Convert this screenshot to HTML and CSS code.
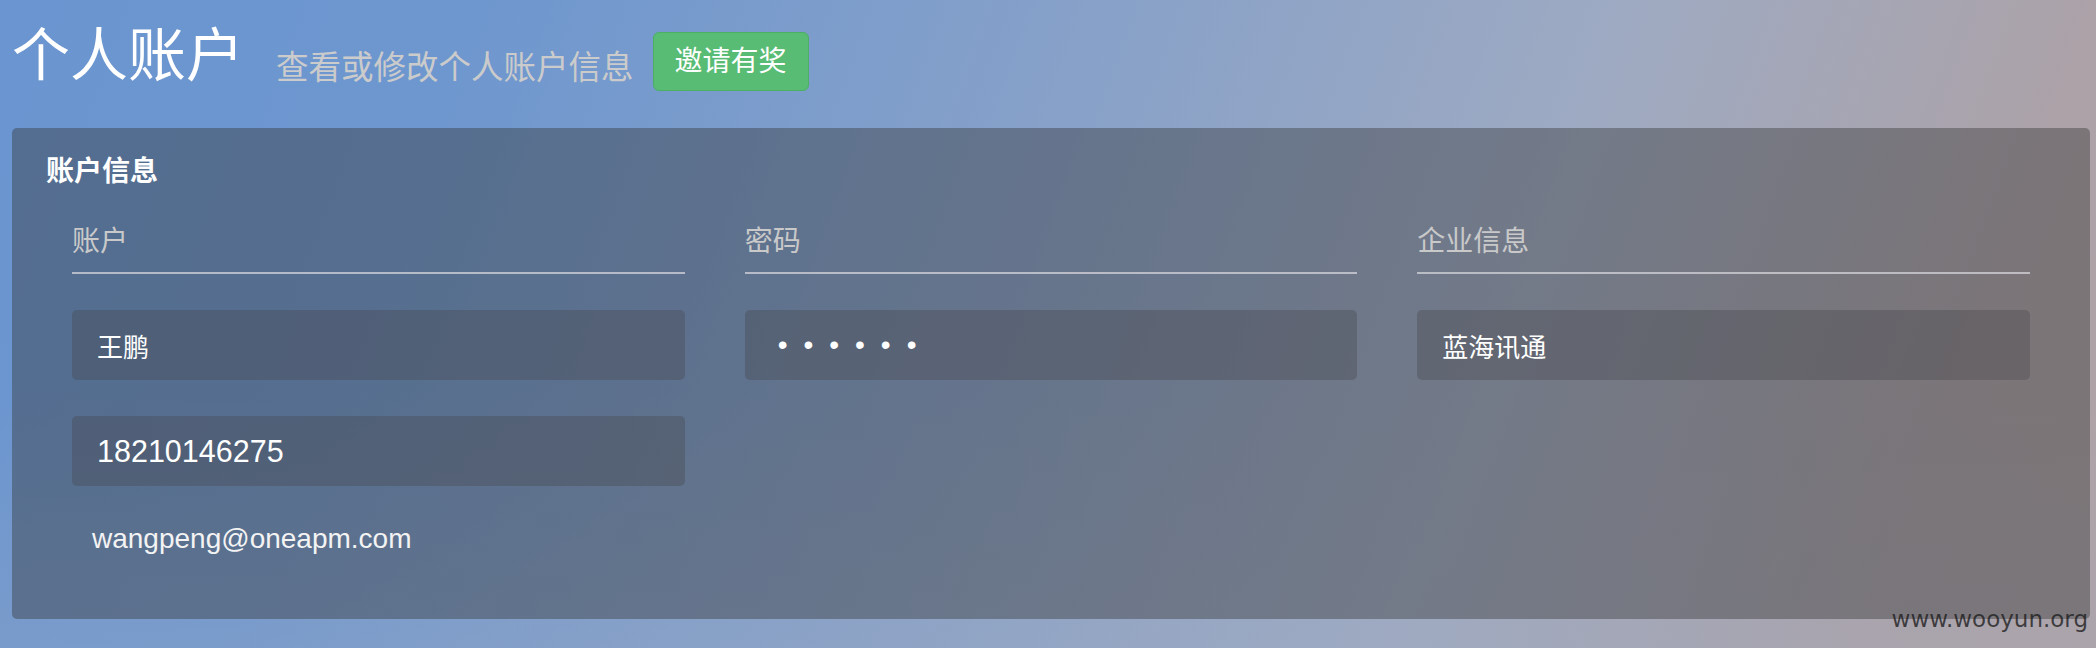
FILE: index.html
```html
<!DOCTYPE html>
<html lang="zh-CN">
<head>
<meta charset="utf-8">
<title>个人账户</title>
<link rel="stylesheet" href="styles.css">
</head>
<body>
<div class="page">
  <header class="page-header">
    <h1 class="title">个人账户<small class="subtitle">查看或修改个人账户信息</small></h1>
    <button class="invite-btn" type="button">邀请有奖</button>
  </header>
  <section class="card">
    <h2 class="card-title">账户信息</h2>
    <div class="card-grid">
      <div class="col">
        <div class="col-label">账户</div>
        <div class="field">王鹏</div>
        <div class="field field-num">18210146275</div>
        <div class="email">wangpeng@oneapm.com</div>
      </div>
      <div class="col">
        <div class="col-label">密码</div>
        <div class="field"><span class="dots">••••••</span></div>
      </div>
      <div class="col">
        <div class="col-label">企业信息</div>
        <div class="field">蓝海讯通</div>
      </div>
    </div>
  </section>
</div>
<div class="watermark">www.wooyun.org</div>
</body>
</html>
```
FILE: styles.css
```css
html, body {
  margin: 0;
  padding: 0;
}
body {
  position: relative;
  min-height: 648px;
  font-family: "Liberation Sans", "Noto Sans CJK SC", sans-serif;
  background:
    linear-gradient(to bottom, rgba(160,170,190,0) 60%, rgba(160,170,190,0.25) 100%),
    linear-gradient(110deg, #6a95d0 0%, #6e97cf 20%, #85a0c9 45%, #9eaac2 70%, #aca2a8 90%, #afa2a5 100%);
}
.page {
  padding: 0 6px 0 12px;
}
.page-header {
  display: flex;
  align-items: flex-start;
  height: 128px;
  padding-top: 24px;
  box-sizing: border-box;
}
.title {
  margin: 0;
  font-size: 58px;
  font-weight: 400;
  line-height: 64px;
  color: #ffffff;
  white-space: nowrap;
}
.subtitle {
  font-size: 32.5px;
  line-height: 32px;
  margin-left: 32px;
  vertical-align: -3px;
  color: #cbcbcb;
}
.invite-btn {
  margin: 8px 0 0 19px;
  height: 59px;
  padding: 0 21px;
  font-family: "Liberation Sans", "Noto Sans CJK SC", sans-serif;
  font-size: 28px;
  line-height: 57px;
  color: #ffffff;
  background: #58bc75;
  border: 1px solid #4caf63;
  border-radius: 6px;
}
.card {
  background: rgba(51,51,51,0.4);
  border-radius: 5px;
  padding: 24px 0 60px;
}
.card-title {
  margin: 0;
  padding-left: 34px;
  font-size: 28px;
  line-height: 40px;
  font-weight: 700;
  color: #ffffff;
}
.card-grid {
  display: grid;
  grid-template-columns: repeat(3, 1fr);
  column-gap: 60px;
  padding: 0 60px;
  margin-top: 30px;
}
.col {
  display: flex;
  flex-direction: column;
}
.col-label {
  font-size: 28px;
  line-height: 40px;
  color: #c9c9c9;
  padding-bottom: 10px;
  border-bottom: 2px solid rgba(212,212,218,0.75);
}
.field {
  display: flex;
  align-items: center;
  height: 70px;
  margin-top: 36px;
  padding: 0 25px;
  box-sizing: border-box;
  border-radius: 5px;
  background: rgba(70,70,75,0.35);
  color: #ffffff;
  font-size: 26px;
}
.field-num {
  font-size: 30.5px;
}
.dots {
  margin-left: 8px;
  font-size: 28px;
  letter-spacing: 16px;
}
.email {
  margin-top: 33px;
  padding-left: 20px;
  font-size: 28px;
  line-height: 40px;
  color: #f3f3f3;
}
.watermark {
  position: absolute;
  right: 8px;
  bottom: 17px;
  font-family: "DejaVu Sans", sans-serif;
  font-size: 23px;
  line-height: 1;
  color: rgba(25,25,25,0.75);
}
```
